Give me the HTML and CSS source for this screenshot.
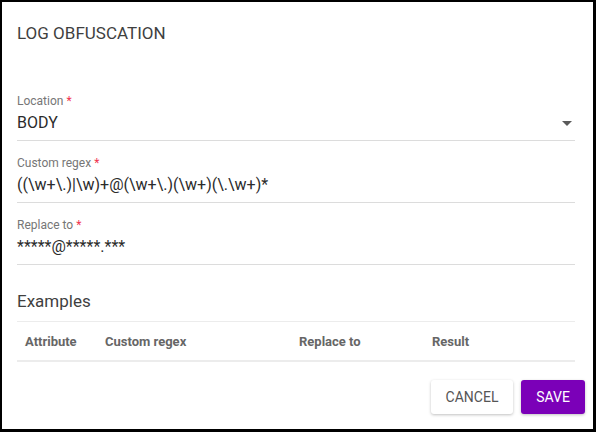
FILE: index.html
```html
<!DOCTYPE html>
<html>
<head>
<meta charset="utf-8">
<link rel="stylesheet" href="styles.css">
</head>
<body>
<div class="dialog">
  <h1 class="title">LOG OBFUSCATION</h1>
  <div class="fields">
    <div class="field">
      <div class="label">Location <span class="req">*</span></div>
      <div class="value select">BODY<span class="arrow"></span></div>
    </div>
    <div class="field">
      <div class="label">Custom regex <span class="req">*</span></div>
      <div class="value">((\w+\.)|\w)+@(\w+\.)(\w+)(\.\w+)*</div>
    </div>
    <div class="field">
      <div class="label">Replace to <span class="req">*</span></div>
      <div class="value">*****@*****.***</div>
    </div>
  </div>
  <h2 class="subtitle">Examples</h2>
  <div class="table">
    <div class="th">Attribute</div>
    <div class="th">Custom regex</div>
    <div class="th">Replace to</div>
    <div class="th">Result</div>
  </div>
  <div class="actions">
    <button class="btn cancel">Cancel</button>
    <button class="btn save">Save</button>
  </div>
</div>
</body>
</html>
```
FILE: styles.css
```css
html, body {
  margin: 0;
  padding: 0;
  background: #000;
}
body {
  font-family: Roboto, "Liberation Sans", sans-serif;
  width: 596px;
  height: 432px;
  overflow: hidden;
}
.dialog {
  margin: 2px 3px 0 2px;
  height: 427px;
  background: #fff;
  padding: 19px 18px 0 15px;
  box-sizing: border-box;
  display: flex;
  flex-direction: column;
}
.title {
  margin: 0;
  font-size: 17px;
  line-height: 24px;
  font-weight: 400;
  color: #3f3f3f;
}
.fields {
  margin-top: 48px;
  display: flex;
  flex-direction: column;
  gap: 14px;
}
.field {
  border-bottom: 1px solid #dcdcdc;
  padding-bottom: 5px;
  display: flex;
  flex-direction: column;
  gap: 2px;
}
.label {
  font-size: 12px;
  line-height: 16px;
  color: #767676;
}
.req {
  color: #f0334f;
}
.value {
  font-size: 16px;
  line-height: 24px;
  color: #2b2b2b;
}
.select {
  display: flex;
  justify-content: space-between;
  align-items: center;
}
.arrow {
  width: 0;
  height: 0;
  border-left: 5px solid transparent;
  border-right: 5px solid transparent;
  border-top: 5px solid #5a5a5a;
  margin-right: 3px;
}
.subtitle {
  margin: 24px 0 0;
  font-size: 17px;
  line-height: 24px;
  font-weight: 400;
  color: #3f3f3f;
}
.table {
  margin-top: 8px;
  display: grid;
  grid-template-columns: 80px 194px 133px 1fr;
  padding-left: 8px;
  border-top: 1px solid #ececec;
  border-bottom: 2px solid #ececec;
  height: 41px;
  box-sizing: border-box;
  align-items: center;
}
.th {
  font-size: 13px;
  font-weight: 700;
  color: #666;
}
.actions {
  margin-top: 18px;
  margin-right: -10px;
  display: flex;
  justify-content: flex-end;
  gap: 8px;
}
.btn {
  height: 34px;
  border: none;
  border-radius: 3px;
  font-family: Roboto, "Liberation Sans", sans-serif;
  font-size: 14px;
  text-transform: uppercase;
  padding: 0;
  cursor: pointer;
}
.cancel {
  width: 82px;
  background: #fff;
  color: #555;
  box-shadow: 0 1px 3px rgba(0,0,0,0.25);
}
.save {
  width: 64px;
  background: #7b00b8;
  color: #fff;
  box-shadow: 0 1px 3px rgba(0,0,0,0.25);
}
```
